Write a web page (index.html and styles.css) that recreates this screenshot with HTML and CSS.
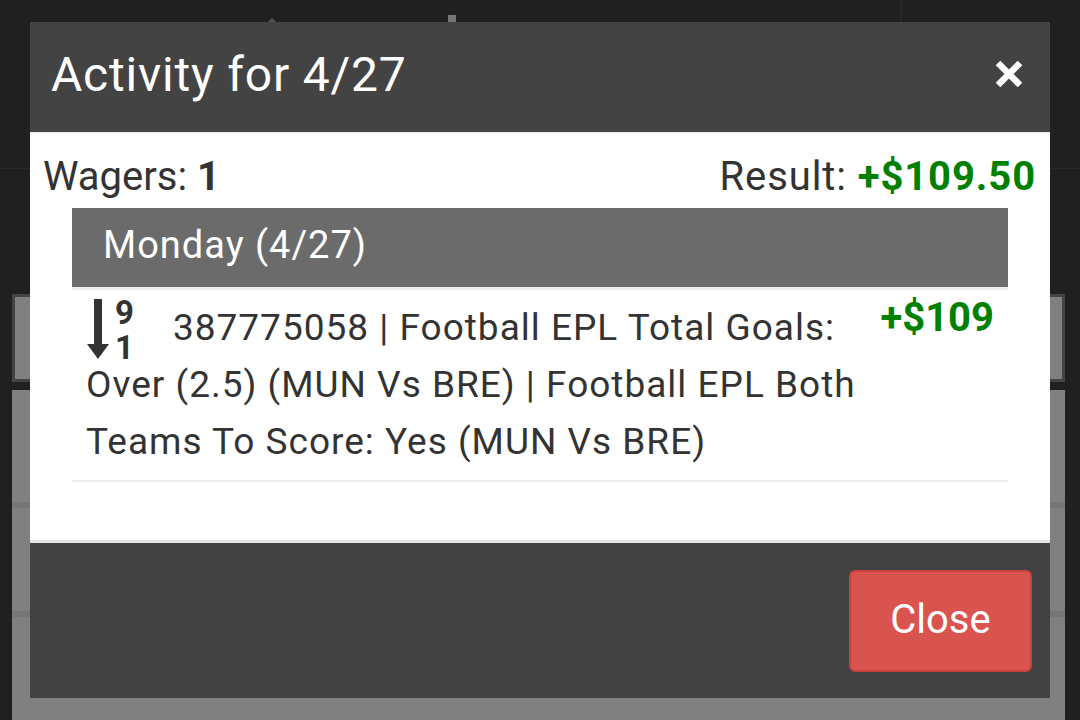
FILE: index.html
```html
<!DOCTYPE html>
<html lang="en">
<head>
<meta charset="utf-8">
<title>Activity for 4/27</title>
<link rel="stylesheet" href="styles.css">
</head>
<body>
<div class="page">
  <div class="topbar">
    <span class="top-tri"></span>
    <span class="top-sq"></span>
    <span class="top-div"></span>
  </div>
  <div class="toolbar"></div>
  <div class="list">
    <div class="list-row"></div>
    <div class="list-row"></div>
    <div class="list-row"></div>
  </div>
</div>

<div class="modal" role="dialog">
  <div class="modal-header">
    <h4 class="modal-title">Activity for 4/27</h4>
    <button class="x-btn" aria-label="Close">
      <svg width="28" height="28" viewBox="0 0 28 28"><path d="M3 3 L25 25 M25 3 L3 25" stroke="#fff" stroke-width="6.5" stroke-linecap="butt"/></svg>
    </button>
  </div>
  <div class="modal-body">
    <div class="summary">
      <span>Wagers: <b>1</b></span>
      <span class="result">Result: <b class="win">+$109.50</b></span>
    </div>
    <div class="day">
      <div class="day-head">Monday (4/27)</div>
      <div class="bet">
        <div class="bet-desc"><span class="sort-icon"><svg width="24" height="62" viewBox="0 0 24 62"><path d="M8 2 H16 V47 H23 L12 62 L1 47 H8 Z" fill="#333"/></svg><span class="sort-digits"><span>9</span><span>1</span></span></span>387775058 | Football EPL Total Goals: Over (2.5) (MUN Vs BRE) | Football EPL Both Teams To Score: Yes (MUN Vs BRE)</div>
        <div class="bet-amount win">+$109</div>
      </div>
    </div>
  </div>
  <div class="modal-footer">
    <button class="btn-close">Close</button>
  </div>
</div>
</body>
</html>
```
FILE: styles.css
```css
html, body {
  margin: 0;
  padding: 0;
}
body {
  width: 1080px;
  height: 720px;
  overflow: hidden;
  background: #202020;
  font-family: Roboto, "Liberation Sans", Arial, sans-serif;
}

/* background page (under backdrop) */
.page {
  padding: 0 15px 0 12px;
}
.topbar {
  height: 168px;
  border-bottom: 1px solid #2a2a2a;
  margin: 0 -15px 0 -12px;
  display: flex;
  align-items: flex-start;
}
.top-tri {
  margin: 18px 0 0 268px;
  width: 0;
  height: 0;
  border-left: 4px solid transparent;
  border-right: 4px solid transparent;
  border-bottom: 4px solid #555;
}
.top-sq {
  margin: 15px 0 0 172px;
  width: 8px;
  height: 7px;
  background: #777;
}
.top-div {
  margin-left: 444px;
  width: 2px;
  height: 22px;
  background: #262626;
}
.toolbar {
  margin-top: 125px;
  height: 82px;
  border: 3px solid #444;
  background: #808080;
}
.list {
  margin-top: 8px;
  background: #808080;
  padding-top: 112px;
}
.list-row {
  height: 103px;
  border-top: 6px solid #767676;
}

/* modal */
.modal {
  position: fixed;
  left: 30px;
  top: 22px;
  width: 1020px;
  background: #fff;
  color: #333;
}
.modal-header {
  height: 110px;
  box-sizing: border-box;
  background: #434343;
  display: flex;
  align-items: center;
  justify-content: space-between;
  padding: 0 27px 6px 21px;
}
.modal-title {
  margin: 0;
  font-size: 48px;
  font-weight: 400;
  color: #fff;
  letter-spacing: 0.8px;
}
.x-btn {
  border: 0;
  background: none;
  padding: 0;
  width: 28px;
  height: 28px;
  display: flex;
}
.modal-body {
  border-top: 1px solid #eee;
  padding: 20px 0 58px;
}
.summary {
  display: flex;
  justify-content: space-between;
  padding: 0 14px 0 13px;
  font-size: 40px;
  line-height: 48px;
}
.summary b {
  font-weight: 700;
}
.result {
  letter-spacing: 0.9px;
}
.win {
  color: #008000;
  font-weight: 700;
}
.day {
  margin: 7px 42px 0;
}
.day-head {
  height: 82px;
  box-sizing: border-box;
  background: #6b6b6b;
  color: #fff;
  font-size: 38px;
  letter-spacing: 1px;
  display: flex;
  align-items: center;
  padding: 0 0 5px 31px;
  border-bottom: 3px solid #eee;
}
.bet {
  display: flex;
  gap: 6px;
  padding: 9px 14px 10px;
  border-bottom: 2px solid #eee;
}
.bet-desc {
  flex: 1;
  font-size: 37px;
  line-height: 57px;
  letter-spacing: 1px;
}
.sort-icon {
  display: inline-flex;
  align-items: flex-start;
  gap: 5px;
  height: 57px;
  vertical-align: top;
  margin-right: 39px;
  letter-spacing: 0;
}
.sort-icon svg {
  margin-top: -2px;
  flex: 0 0 auto;
}
.sort-digits {
  display: flex;
  flex-direction: column;
  font-weight: 700;
  font-size: 33px;
  line-height: 35px;
  margin-top: -4px;
}
.bet-amount {
  flex: 0 0 auto;
  font-size: 40px;
  line-height: 40px;
  margin-top: -1px;
}
.modal-footer {
  border-top: 3px solid #e5e5e5;
  background: #424242;
  height: 158px;
  box-sizing: border-box;
  display: flex;
  justify-content: flex-end;
  align-items: flex-start;
  padding: 27px 18px 0 0;
}
.btn-close {
  width: 183px;
  height: 102px;
  box-sizing: border-box;
  background: #d9534f;
  border: 2px solid #c9403c;
  border-radius: 6px;
  color: #fff;
  font-family: Roboto, "Liberation Sans", Arial, sans-serif;
  font-size: 40px;
  padding: 0 0 4px;
}
```
